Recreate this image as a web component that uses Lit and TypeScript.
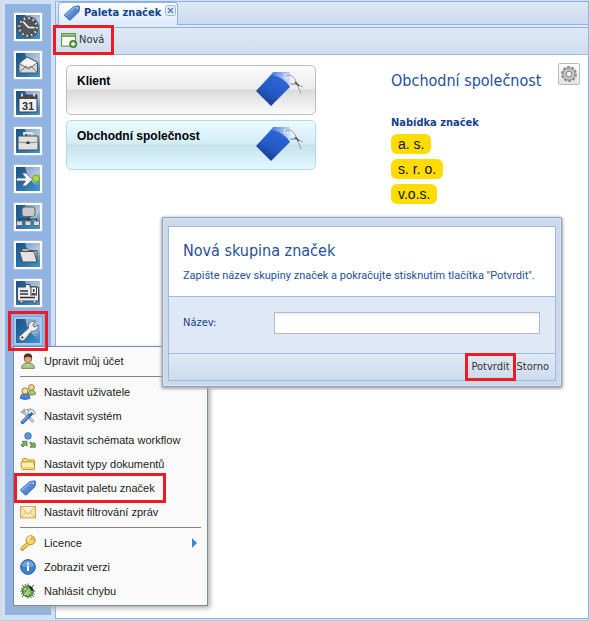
import { LitElement, html, svg, css } from "lit";
import { customElement, property, state } from "lit/decorators.js";
import { classMap } from "lit/directives/class-map.js";

const tagShape = svg`
  <path d="M9.800 1.600 14.600.8q.9.200 1 1.200l-.6 4.600-8.300 8.100q-.9.700-1.700 0L.9 11q-.8-.9 0-1.700z" fill="url(#tag)" stroke="#2d5fa8" stroke-width=".8"/>
  <path d="M1.800 10 10.200 2.600l3.200-.6" fill="none" stroke="#a9cbf2" stroke-width=".8"/>
  <circle cx="13.200" cy="3.100" r="1.100" fill="#fff" stroke="#3567aa" stroke-width=".5"/>`;

const small: Record<string, unknown> = {
  tag: tagShape,
  user: svg`
    <path d="M1.600 15.400q-.2-4.300 3.900-4.900h5q4.100.6 3.900 4.900z" fill="#a9c98a" stroke="#5d7f45" stroke-width=".8"/>
    <path d="m6 10 2 2.600L10 10z" fill="#f7e4c7"/>
    <ellipse cx="8" cy="5.800" rx="3.600" ry="4.600" fill="#d9a877" stroke="#5a3a22" stroke-width=".7"/>
    <path d="M3.900 5.500Q3.300.6 8 .6t4.100 4.900Q10.500 3.600 8 3.700T3.900 5.500" fill="#4a3120"/>`,
  users: svg`
    <path d="M8.500 10.500q-.3-4.200 3-4.300 4-.1 4 4-2.500 1.600-7 .3" fill="#9fcb79" stroke="#55803a" stroke-width=".8"/>
    <circle cx="11.400" cy="3.500" r="2.900" fill="#f6d58a" stroke="#9a6a1f" stroke-width=".9"/>
    <path d="M.5 14.500q-.2-5 4.500-5.200 5 .1 4.800 5.200-4.800 1.800-9.300 0" fill="#4d86d6" stroke="#2553a0" stroke-width=".8"/>
    <circle cx="5" cy="7" r="3.100" fill="#fae0a0" stroke="#9a6a1f" stroke-width=".9"/>`,
  tools: svg`
    <path d="M2 2.500 13.500 14" stroke="#8a8f96" stroke-width="2.600"/>
    <path d="M2 2.500 13.500 14" stroke="#d9dde2" stroke-width="1.200"/>
    <path d="M.8 3.800q1.600 1.600 3.200-.2T3.600.8" fill="none" stroke="#9aa0a8" stroke-width="1.400"/>
    <path d="M12 5 2.500 14.300" stroke="#2b5fae" stroke-width="3.600" stroke-linecap="round"/>
    <path d="M8.500 8 2.500 13.800" stroke="#7fb0ee" stroke-width="1.200" stroke-linecap="round"/>
    <path d="M6.500 2q3.500-2.400 7 .2l1.900 3.400-1.900 1-1.800-2.300-2.200 2-1.700-1.800 1.300-1.500z" fill="#dfe2e6" stroke="#7c828b" stroke-width=".8"/>`,
  flow: svg`
    <circle cx="8" cy="3.900" r="3.400" fill="#5c94dc" stroke="#3a6fbd" stroke-width=".6"/>
    <path d="M2 9.300h5v5L5.300 12.600 3 15 1 13l2.500-2.200z" fill="#7fb05f" stroke="#47763a" stroke-width=".8"/>
    <path d="M9.700 10.500h2l1 1.200 1-1.200 1.600 1.400v3.300H10l1.300-1.700z" fill="#7fb05f" stroke="#47763a" stroke-width=".8"/>`,
  folder: svg`
    <path d="M2.500 12.500V3.300q0-.8.8-.8h3.400l1 1.500h6q.8 0 .8.800v8" fill="#f8dc7c" stroke="#b98a1c" stroke-width=".9"/>
    <path d="M.8 6.800q-.1-.9.8-.9h11.300q.7 0 .9.800l1.100 6q0 .9-.8.900H2.700q-.8 0-.9-.8z" fill="#fdf0b0" stroke="#b98a1c" stroke-width=".9"/>
    <path d="M3 12h10.500" stroke="#f3cf58" stroke-width="1.600"/>`,
  mail: svg`
    <rect x=".6" y="2.600" width="14.800" height="11.300" fill="#fbe8b5" stroke="#c99c45" stroke-width=".9"/>
    <path d="m1 13.500 5.300-5.300M15 13.500 9.700 8.200M1 3l7 7 7-7" fill="#fff3cf" stroke="#d9ae5c" stroke-width=".9"/>`,
  key: svg`
    <path d="M7 7.200 1 13v2.300h2.500l.1-1.500h1.500l.1-1.500h1.500l2.500-2.700z" fill="#f9cf4e" stroke="#b4821d" stroke-width=".8"/>
    <circle cx="10.700" cy="5.200" r="4.500" fill="#fbd964" stroke="#b4821d" stroke-width=".9"/>
    <path d="M7.500 4.500q.9-2.600 3.500-2.700" fill="none" stroke="#fff5c0" stroke-width="1.100"/>
    <circle cx="12.200" cy="3.800" r="1.200" fill="#fff" stroke="#a8761b" stroke-width=".7"/>`,
  info: svg`
    <circle cx="8" cy="8" r="7.400" fill="#3f7fd0" stroke="#255da9" stroke-width=".9"/>
    <path d="M2 7a6 5.300 0 0 1 12 0q-6 2-12 0" fill="#fff" opacity=".28"/>
    <path d="M7 6.800h2v5.200H7zM7 3.700h2v1.900H7z" fill="#fff"/>`,
  bug: svg`
    <path d="M4 4 2 2M8 3V.5M12 4l2-2M3 8H.5M13 8h2.500M4 12l-2 2M12 12l2 2M8 13v2.500M5.500 2.500 5 1M10.500 13.500l1 1.500M2.500 10.500 1 11.500M13.500 10.500l1.500 1M2.700 6 1 5" stroke="#4d5c45" stroke-width="1"/>
    <circle cx="7.700" cy="8.300" r="5.500" fill="#6faa4a" stroke="#2e5a22" stroke-width=".9"/>
    <path d="M8.500 2.800q4.600.4 4.900 5L10.500 7Z" fill="#1d2a1a"/>
    <path d="M4.200 12.200 10 6M4 7l2-2M7 12l3-3" stroke="#bfe39c" stroke-width="1.100"/>`,
  add: svg`
    <rect x=".6" y="1.600" width="14" height="12.500" fill="#f5faef" stroke="#5c8a48" stroke-width="1"/>
    <path d="M1 2h13.200v3H1z" fill="#79a85e"/>
    <path d="M1.600 2.700h12" stroke="#b5d59c" stroke-width=".9"/>
    <circle cx="12.200" cy="12" r="3.700" fill="#5f9543" stroke="#3f7029" stroke-width=".7"/>
    <path d="M12.200 9.900v4.200M10.100 12h4.200" stroke="#fff" stroke-width="1.400"/>`,
  gear: svg`
    <g fill="none" stroke="#858585">
      <circle cx="8" cy="8" r="6.900" stroke-width="2" stroke-dasharray="2.800 1.535"/>
      <circle cx="8" cy="8" r="4.600" stroke="#c4c4c4" stroke-width="3.400"/>
      <circle cx="8" cy="8" r="6.100" stroke-width=".8"/>
      <circle cx="8" cy="8" r="2.800" stroke-width="1"/>
    </g>`,
};

const glyphs: Record<string, unknown> = {
  clock: svg`
    <circle cx="15" cy="15" r="10.800" fill="#50555a"/>
    <circle cx="15" cy="15" r="8.800" fill="none" stroke="#dcdcdc" stroke-width="2.200" stroke-dasharray="1.500 3.108"/>
    <path d="m10 9.500 5.500 6 6 .2" fill="none" stroke="#f2f2f2" stroke-width="1.700"/>`,
  mail: svg`
    <path d="M6 13.500 14 7l10.500 5v11H6z" fill="#d9d9d9" stroke="#4b5258"/>
    <path d="m8 12.500 6-4.500 9 4.500-7.500 6z" fill="#f6f6f6"/>
    <path d="m6 22.500 7.500-6.500 2 2 2.200-2 6.800 6.500M6 13.500l9.500 5.500 9-6.500" fill="none" stroke="#5b6268" stroke-width=".9"/>`,
  calendar: svg`
    <path d="M6 7h18v17H6z" fill="#f2f2f2" stroke="#444" stroke-width="1"/>
    <path d="M6 7h18v4H6z" fill="#4a4a4a"/>
    <path d="M9 5.500v3M21 5.500v3" stroke="#eee" stroke-width="1.600"/>
    <text x="15" y="22" class="day">31</text>`,
  case: svg`
    <path d="M11 10V7h8v3" fill="none" stroke="#e2e2e2" stroke-width="1.800"/>
    <path d="M5 10h20v14H5z" fill="#e0e0e0" stroke="#474b50"/>
    <path d="M5.500 16q9.500 1.500 19 0" fill="none" stroke="#8a8a8a" stroke-width="1.200"/>
    <path d="M13.500 15.500h3v2.500h-3z" fill="#333"/>`,
  arrow: svg`
    <path d="M3.500 14h9L9 9h4l6.500 6.500L13 22H9l3.500-5h-9z" fill="#f4f4f4" stroke="#53616e" stroke-width=".8"/>
    <circle cx="23" cy="14.500" r="3.500" fill="#a6d93a" stroke="#6c9a26" stroke-width=".8"/>`,
  network: svg`
    <rect x="9" y="5" width="13" height="9.500" rx="2.500" fill="#c9c9c9" stroke="#62676d"/>
    <path d="M15.500 15v5M6.500 20v-3h17v3" fill="none" stroke="#333" stroke-width="1.200"/>
    <g fill="#dadada" stroke="#555b62" stroke-width=".8">
      <rect x="3.500" y="19" width="6" height="4.500" rx="1"/>
      <rect x="12" y="19" width="6" height="4.500" rx="1"/>
      <rect x="20.500" y="19" width="6" height="4.500" rx="1"/>
    </g>`,
  folder: svg`
    <path d="M9 20V8.500h5l2 2h8V22H11z" fill="#b6b6b6" stroke="#4c5157"/>
    <path d="M6.500 11.500H21l3 10.500H9.500z" fill="#e2e2e2" stroke="#4c5157"/>`,
  badge: svg`
    <path d="M4.500 9h8V6.500H17V9h8.500v14H4.500z" fill="#ededed" stroke="#444a50"/>
    <path d="M7 13h8M7 16h8M7 19.500h15" stroke="#333" stroke-width="1.400"/>
    <rect x="18" y="9" width="5.500" height="8" fill="#fff" stroke="#333" stroke-width=".9"/>
    <path d="M19 16.500q1.700-2 3.500 0M20.700 11v3" stroke="#444" stroke-width="1.700"/>
    <path d="M7 23v2h3v-2M20 23v2h3v-2" fill="#ddd" stroke="#444" stroke-width=".8"/>`,
  wrench: svg`
    <path d="M6.300 20.500 15.500 12.300q-1-4.700 3-6.800l4-.5-2.700 4 1.500 2.200 3.900-2.400q.8 3.200-1.800 5.300-2.200 1.700-5 1.100L11.500 24q-1.900 1.800-4.200.2-2-1.800-1-3.700" fill="#f1f1f1" stroke="#5b6065" stroke-width=".9"/>
    <circle cx="9.300" cy="21.500" r="1.200" fill="#555"/>`,
};

@customElement("app-icon")
class AppIcon extends LitElement {
  @property() name = "";

  static styles = css`
    :host { display: block; flex: none; width: 16px; height: 16px; }
    .icon { display: block; width: 100%; height: 100%; overflow: visible; }
  `;

  render() {
    return html`<svg class="icon" viewBox="0 0 16 16" fill="none" aria-hidden="true">
      <defs><linearGradient id="tag" x1="0" y1="0" x2="1" y2="1">
        <stop offset="0" stop-color="#8db9ef"/><stop offset=".6" stop-color="#4d86d0"/><stop offset="1" stop-color="#3567b4"/>
      </linearGradient></defs>
      ${small[this.name]}
    </svg>`;
  }
}

@customElement("app-tile")
class AppTile extends LitElement {
  @property() name = "";
  @property({ type: Boolean }) active = false;

  static styles = css`
    :host { display: block; }
    .tile { display: block; width: 30px; height: 30px; }
    .day { font: bold 11px "Liberation Sans", sans-serif; fill: #333; text-anchor: middle; }
  `;

  render() {
    return html`<svg class="tile" viewBox="0 0 30 30" aria-hidden="true">
      <defs>
        <linearGradient id="base" x1="0" y1="0" x2="1" y2="1">
          <stop offset="0" stop-color="#1b5288"/><stop offset=".6" stop-color="#2a76ae"/><stop offset="1" stop-color="#4596c8"/>
        </linearGradient>
        <linearGradient id="shine" x1="0" y1="0" x2=".6" y2="1">
          <stop offset="0" stop-color="#7d9fc8"/><stop offset=".6" stop-color="#b3cae4"/><stop offset="1" stop-color="#4d90c4"/>
        </linearGradient>
      </defs>
      <rect x=".5" y=".5" width="29" height="29" rx="1.500" fill=${this.active ? "#a9caee" : "#fbfaf6"} stroke=${this.active ? "#7ea6d8" : "#b4bfcc"}/>
      <rect x="3" y="3" width="24" height="24" fill="url(#base)"/>
      <path d="M12 3h15v21Q15 18 12 3" fill="url(#shine)"/>
      ${glyphs[this.name]}
    </svg>`;
  }
}

@customElement("tag-card")
class TagCard extends LitElement {
  @property() label = "";
  @property({ type: Boolean }) selected = false;

  static styles = css`
    :host { display: block; }
    .card {
      box-sizing: border-box; width: 100%; height: 50px; padding: 6px 12px 6px 10px;
      display: flex; justify-content: space-between; align-items: flex-start;
      border: 1px solid #bdbdbd; border-radius: 5px; text-align: left;
      background: linear-gradient(#fbfbfb, #ececec 48%, #dadada 50%, #fbfbfb);
      font: bold 12px/18px "Liberation Sans", Arial, sans-serif; color: #000;
    }
    .selected { border-color: #b0dbe8; background: linear-gradient(#eafaff, #d4eef8 46%, #c4e2ee 50%, #e4f9ff); }
    .art { display: block; flex: none; width: 48px; height: 36px; }
  `;

  render() {
    return html`<button class=${classMap({ card: true, selected: this.selected })}>
      <span>${this.label}</span>
      <svg class="art" viewBox="0 0 48 36" aria-hidden="true">
        <defs>
          <linearGradient id="body" x1=".8" y1=".1" x2=".3" y2="1">
            <stop offset="0" stop-color="#2f69d8"/><stop offset=".6" stop-color="#2459c4"/><stop offset="1" stop-color="#173a82"/>
          </linearGradient>
          <linearGradient id="fold" x1="0" y1="0" x2="1" y2=".2">
            <stop offset="0" stop-color="#3f78de"/><stop offset="1" stop-color="#c9dbfa"/>
          </linearGradient>
        </defs>
        <path d="M18.500 0H35v15L16 34 1 19z" fill="url(#body)"/>
        <path d="M18.500 0H35v15Q30 6 16 2.500z" fill="url(#fold)"/>
        <circle cx="31" cy="4.500" r="1.800" fill="#9bb5df" stroke="#fff"/>
        <path d="M31 3.500q7-2 10 6l5 12.500M35 12q7-1 13 3M36 12l7 0" fill="none" stroke="#9b9fa4" stroke-width="1"/>
        <path d="m40 10 4 4" stroke="#555" stroke-width="1.600"/>
      </svg>
    </button>`;
  }
}

const tiles = [
  ["clock", "Hodiny"], ["mail", "Pošta"], ["calendar", "Kalendář"], ["case", "Spisy"], ["arrow", "Úkoly"],
  ["network", "Struktura"], ["folder", "Dokumenty"], ["badge", "Kontakty"],
];

const menuGroups = [
  [["user", "Upravit můj účet"]],
  [
    ["users", "Nastavit uživatele"], ["tools", "Nastavit systém"], ["flow", "Nastavit schémata workflow"],
    ["folder", "Nastavit typy dokumentů"], ["tag", "Nastavit paletu značek"], ["mail", "Nastavit filtrování zpráv"],
  ],
  [["key", "Licence"], ["info", "Zobrazit verzi"], ["bug", "Nahlásit chybu"]],
];

@customElement("app-root")
class AppRoot extends LitElement {
  @state() private groups = ["Klient", "Obchodní společnost"];
  @state() private selected = "Obchodní společnost";

  static styles = css`
    :host {
      --ui: "DejaVu Sans Condensed", Tahoma, "Noto Sans", sans-serif;
      --arial: "Liberation Sans", Arial, sans-serif;
      --line: #99bbe8;
      display: block; color: #222;
    }
    * { box-sizing: border-box; }
    button, input { font: inherit; color: inherit; margin: 0; }
    button { border: 0; background: none; padding: 0; cursor: pointer; }
    h1, h2, h3, p, ul { margin: 0; padding: 0; font-weight: normal; }
    ul { list-style: none; }
    .page {
      display: flex; min-height: 100vh; gap: 4px; padding-right: 1px;
      background: #d0dff2; border-left: 1px solid #d8d8d8; border-bottom: 1px solid #c8c8c8;
    }
    .rail { position: relative; width: 46px; margin: 4px 0 5px 4px; padding: 8px 8px 0; background: #91b3e4; }
    .tiles { display: grid; gap: 8px; }
    .launch { display: block; }
    .current { position: relative; }
    .mark { outline: 3px solid #ed1c24; }
    .launch.mark { outline-offset: 2px; position: relative; z-index: 3; }

    .menu {
      position: absolute; z-index: 2; top: 30px; left: 0; width: 195px; padding: 2px 3px;
      background: #fafafa; border: 1px solid #718bb7; box-shadow: 2px 2px 5px #aaa;
      font: 11px/16px var(--arial);
    }
    .group + .group::before { content: ""; display: block; height: 1px; margin: 3px; background: #848484; }
    .item { display: flex; align-items: center; gap: 8px; width: 100%; height: 24px; padding: 0 3px; text-align: left; }
    .item.mark { width: 146px; }
    .more { margin: 0 4px 0 auto; width: 5px; height: 10px; background: #3d86d8; clip-path: polygon(0 0, 100% 50%, 0 100%); }

    .main {
      position: relative; flex: 1; min-width: 0; display: flex; flex-direction: column;
      margin: 1px 0; border: 1px solid #8db2e3; background: #fff;
    }
    .tabs {
      display: flex; align-items: flex-end; height: 26px; padding: 0 2px 2px;
      border-bottom: 1px solid #8db2e3; background: linear-gradient(#dfe9f6, #cbdaee 22px, #8db2e3 22px, #8db2e3 23px, #deecfd 23px);
    }
    .tab {
      display: flex; align-items: center; gap: 4px; height: 23px; padding: 0 1px 2px 5px;
      border: 1px solid #8db2e3; border-bottom: 0; border-radius: 4px 4px 0 0;
      background: linear-gradient(#fff, #deecfd 20px);
      font: bold 11px/16px var(--ui); color: #15428b;
    }
    .close { align-self: flex-start; width: 11px; height: 11px; margin-top: 2px; }
    .close svg { display: block; }
    .toolbar { height: 27px; padding: 1px; border-bottom: 1px solid #99bbe8; background: linear-gradient(#dfe9f5, #cfddef); }
    .tool { display: flex; align-items: center; gap: 2px; height: 22px; padding: 0 6px 0 4px; font: 11px/16px var(--ui); color: #333; }
    .tool.mark { outline-offset: 1px; position: relative; z-index: 1; }

    .content { display: grid; grid-template-columns: minmax(0, 250px) minmax(0, 1fr); gap: 75px; padding: 10px 8px 10px 10px; }
    .cards { display: grid; gap: 5px; align-content: start; }
    .head { display: flex; justify-content: space-between; align-items: flex-start; margin-top: -2px; }
    .head h2 { font: 16px/24px var(--ui); color: #25509a; margin-top: 6px; white-space: nowrap; }
    .gear {
      width: 22px; height: 22px; display: grid; place-items: center;
      border: 1px solid #bbb; border-radius: 2px; background: linear-gradient(#fff, #e4e4e4);
    }
    .palette { display: grid; justify-items: start; gap: 3px; margin-top: 22px; }
    .palette h3 { font: bold 11px/16px var(--ui); color: #15428b; }
    .chips { display: grid; gap: 5px; justify-items: start; }
    .chips li { height: 20px; padding: 0 7px; border-radius: 6px; background: #ffdc00; font: 14px/21px var(--arial); color: #111; }

    .dialog {
      position: absolute; z-index: 4; top: 215px; left: 106px; right: 26px; padding: 8px 5px 5px;
      border: 1px solid #8ba4c2; border-radius: 2px; background: #cdd9e9;
      box-shadow: inset 0 0 0 1px #dbe5f1, 0 1px 3px 1px #aaa; color: #25509a; font: 11px/16px var(--ui);
    }
    .frame { border: 1px solid var(--line); }
    .intro { padding: 12px 14px 10px; background: #fff; }
    .intro h1 { font: 16px/24px var(--ui); }
    .intro p { margin-top: 3px; font: 11px/20px Roboto, sans-serif; white-space: nowrap; }
    .field {
      display: grid; grid-template-columns: 91px minmax(0, 1fr); align-items: center;
      padding: 15px 15px 19px 14px; border: 1px solid var(--line); border-width: 1px 0; background: #dfe8f6; color: #15428b;
    }
    .field input { width: 100%; height: 22px; border: 1px solid #b5b8c8; background: linear-gradient(#efefef, #fff 5px); }
    .actions { display: flex; justify-content: flex-end; gap: 4px; height: 26px; padding: 2px 6px; background: linear-gradient(#e1eaf5, #ccdbec); color: #333; }
    .actions .mark { padding: 0 3px; }
  `;

  private item([icon, label]: string[]) {
    return html`<li><button class=${classMap({ item: true, mark: icon === "tag" })}>
      <app-icon name=${icon}></app-icon><span>${label}</span>
      ${icon === "key" ? html`<span class="more"></span>` : ""}
    </button></li>`;
  }

  render() {
    return html`<div class="page">
      <nav class="rail">
        <div class="tiles">
          ${tiles.map(([name, label]) => html`<button class="launch" aria-label=${label}><app-tile name=${name}></app-tile></button>`)}
          <div class="current">
            <button class="launch mark" aria-label="Nastavení"><app-tile name="wrench" active></app-tile></button>
            <div class="menu">
              ${menuGroups.map((g) => html`<ul class="group">${g.map((i) => this.item(i))}</ul>`)}
            </div>
          </div>
        </div>
      </nav>
      <main class="main">
        <div class="tabs">
          <div class="tab">
            <app-icon name="tag"></app-icon><span>Paleta značek</span>
            <button class="close" aria-label="Zavřít">
              <svg width="11" height="11" viewBox="0 0 11 11"><rect x=".5" y=".5" width="10" height="10" rx="2" fill="#e6f0fc" stroke="#98b8e0"/>
                <path d="m3 3 5 5M8 3 3 8" stroke="#6486b5" stroke-width="1.700"/></svg>
            </button>
          </div>
        </div>
        <div class="toolbar">
          <button class="tool mark"><app-icon name="add"></app-icon>Nová</button>
        </div>
        <div class="content">
          <div class="cards">
            ${this.groups.map((g) => html`<tag-card .label=${g} ?selected=${g === this.selected} @click=${() => (this.selected = g)}></tag-card>`)}
          </div>
          <section>
            <div class="head">
              <h2>${this.selected}</h2>
              <button class="gear" aria-label="Možnosti"><app-icon name="gear"></app-icon></button>
            </div>
            <div class="palette">
              <h3>Nabídka značek</h3>
              <ul class="chips"><li>a. s.</li><li>s. r. o.</li><li>v.o.s.</li></ul>
            </div>
          </section>
        </div>
        <div class="dialog" role="dialog" aria-labelledby="title">
          <div class="frame">
            <div class="intro">
              <h1 id="title">Nová skupina značek</h1>
              <p>Zapište název skupiny značek a pokračujte stisknutím tlačítka "Potvrdit".</p>
            </div>
            <div class="field"><label for="name">Název:</label><input id="name" type="text"></div>
            <div class="actions"><button class="mark">Potvrdit</button><button>Storno</button></div>
          </div>
        </div>
      </main>
    </div>`;
  }
}
